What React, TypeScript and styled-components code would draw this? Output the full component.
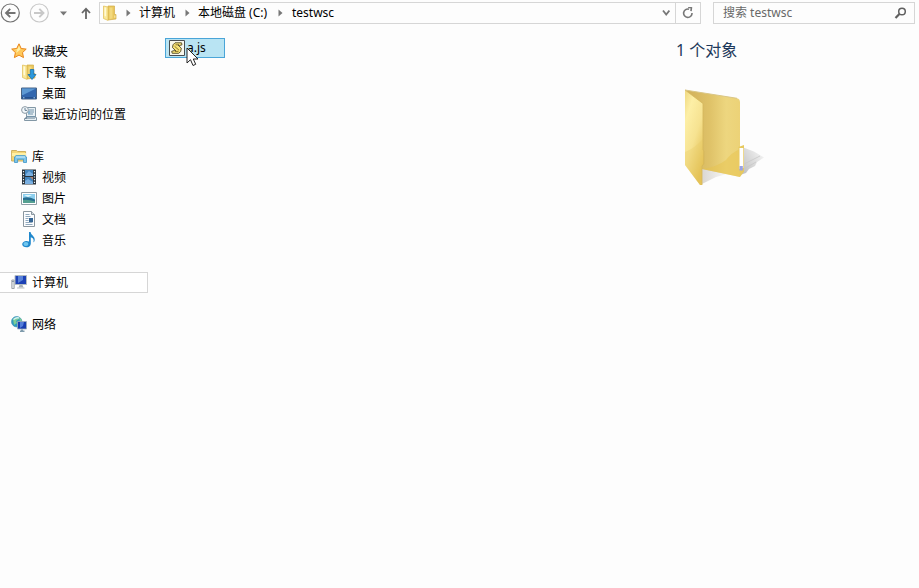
import React from 'react';
import styled, { createGlobalStyle } from 'styled-components';

const GlobalStyle = createGlobalStyle`
  * { box-sizing: border-box; }
  body {
    margin: 0;
    background: #fdfdfd;
    color: #000;
    font: 12px/20px "Noto Sans", "Noto Sans CJK SC", sans-serif;
    overflow: hidden;
  }
  svg { display: block; flex: none; }
`;

const Window = styled.div`
  width: 919px;
  height: 588px;
  display: flex;
  flex-direction: column;
`;

const Toolbar = styled.header`
  height: 24px;
  padding-top: 2px;
  display: flex;
  flex: none;
`;

const NavButtons = styled.div`
  width: 99px;
  height: 22px;
  display: flex;
  align-items: center;
`;

const NavIcon = styled.span<{ $gap?: number }>`
  margin-left: ${(p) => p.$gap ?? 0}px;
`;

const AddressBar = styled.div`
  width: 602px;
  height: 22px;
  border: 1px solid #d6d6d6;
  display: flex;
  align-items: center;
  padding-left: 2px;
`;

const Crumb = styled.span<{ $width: number }>`
  width: ${(p) => p.$width}px;
  white-space: nowrap;
`;

const Chevron = styled.span<{ $before: number; $after: number }>`
  margin-left: ${(p) => p.$before}px;
  margin-right: ${(p) => p.$after}px;
`;

const DropArea = styled.span`
  margin-left: auto;
  width: 17px;
`;

const RefreshButton = styled.span`
  width: 25px;
  height: 20px;
  border-left: 1px solid #d6d6d6;
  display: flex;
  align-items: center;
  justify-content: center;
`;

const SearchBox = styled.div`
  width: 202px;
  height: 22px;
  margin-left: 12px;
  border: 1px solid #d6d6d6;
  padding: 0 7px 0 9px;
  display: flex;
  align-items: center;
  justify-content: space-between;
  color: #686868;
`;

const Content = styled.main`
  display: flex;
  flex: 1;
`;

const Sidebar = styled.nav`
  width: 148px;
  padding-top: 17px;
`;

const Group = styled.section`
  margin-bottom: 21px;
`;

const TreeRow = styled.div<{ $child?: boolean; $selected?: boolean }>`
  height: 21px;
  display: flex;
  align-items: center;
  gap: 5px;
  padding-left: ${(p) => (p.$child ? 20 : 10)}px;
  border: 1px solid ${(p) => (p.$selected ? '#d6d6d6' : 'transparent')};
  border-left-width: ${(p) => (p.$selected ? 0 : 1)}px;
  ${(p) => p.$selected && 'padding-left: 11px; background: #fff;'}
  white-space: nowrap;

  svg { margin-top: -1px; }
`;

const FileList = styled.section`
  width: 516px;
  padding: 14px 0 0 17px;
`;

const FileItem = styled.div`
  position: relative;
  width: 60px;
  height: 20px;
  border: 1px solid #4aa5d8;
  background: #b9e4f3;
  display: flex;
  align-items: center;
  padding-left: 3px;
  gap: 2px;
`;

const Pointer = styled.span`
  position: absolute;
  left: 20px;
  top: 8px;
`;

const Details = styled.aside`
  padding: 14px 0 0 12px;
`;

const DetailsTitle = styled.h1`
  margin: 0 0 24px;
  color: #1e395b;
  font-size: 16px;
  font-weight: 400;
  line-height: 25px;
`;

const FolderPreview = styled.div`
  padding-left: 4px;
`;

const Star = () => (
  <svg width="16" height="16" viewBox="0 0 16 16">
    <path d="M8 .8 10.2 5.5l5 .6-3.7 3.5 1 5L8 12.1l-4.6 2.5 1-5L.7 6.1l5-.6z" fill="#ffc95b" stroke="#e98518" />
    <path d="M8 2.8 9.4 6.6 5.2 10 6 6.7 3 6.9 6.6 6z" fill="#fff0a6" />
  </svg>
);

const SmallFolder = ({ download }: { download?: boolean }) => (
  <svg width="16" height="16" viewBox="0 0 16 16">
    <path d="M6 1h6.5v8.5H14V14l-8 1z" fill="#e9c65d" stroke="#d3ae49" strokeWidth=".7" />
    <path d="M1.5 1 6 2v13.4L1.5 13.5z" fill="#fae89a" stroke="#dfbd54" strokeWidth=".7" />
    <path d="M2.5 2.5H4v9l-1.5-.8zM12.5 10.5h.8v2.3h-.8z" fill="#fff9d6" />
    <path d="M7.5 2.5h3v11l-3 .5z" fill="#f3d97e" />
    {download && <path d="M9.3 5.5h3.5v5H15l-4 5-4-5h2.3z" fill="#2b98dc" stroke="#176fae" strokeWidth=".8" />}
  </svg>
);

const Desktop = () => (
  <svg width="16" height="16" viewBox="0 0 16 16">
    <path d="M.5 3h15v11H.5z" fill="#3267ae" stroke="#496383" />
    <path d="M1 3.5h14L2 10H1z" fill="#5d99d3" />
    <path d="M1 12h14v1.5H1z" fill="#24508f" />
    <path d="M2 12.8h1.5m9 0h1.5" stroke="#a5cfec" />
  </svg>
);

const Recent = () => (
  <svg width="16" height="16" viewBox="0 0 16 16">
    <path d="M5.5 1.5h9v10h1v3h-12v-2h2z" fill="#e8f0f4" stroke="#8297a5" />
    <path d="M8 4h5M9 6h4M7 8h5M6 10.5h8" stroke="#7594aa" />
    <path d="M7 5h2v3H7z" fill="#86b4d1" />
    <circle cx="4" cy="4" r="3.4" fill="#f2f7fa" stroke="#8b9aa5" />
    <path d="M4 2v2.4h2M4 12h10" fill="none" stroke="#657f92" />
  </svg>
);

const Library = () => (
  <svg width="16" height="16" viewBox="0 0 16 16">
    <path d="M.6 2.5h5l1 1h8v9.5H.6z" fill="#f5d778" stroke="#cdb060" />
    <path d="M1 5h14v3H1z" fill="#fff0a5" />
    <path d="M3.5 9 5 7.6h9L15.5 9v5.5h-3V11.3H6.6v3.2H3.5z" fill="#7cc4ea" stroke="#3d95c6" strokeWidth=".8" />
    <path d="M5 9h9" stroke="#d5effa" />
  </svg>
);

const Video = () => (
  <svg width="16" height="16" viewBox="0 0 16 16">
    <path d="M1 .5h14v15H1z" fill="#29333c" />
    <path d="M4 1h8v6H4zM4 8h8v7H4z" fill="#4385bd" />
    <path d="M5 5 8 2l4 3v2H5zM4 12l3-2 5 3v2H4z" fill="#7aafe0" />
    <path d="M9 8h3v3z" fill="#b18473" />
    <path d="M2.5 2v12M13.5 2v12" stroke="#ecf2f5" strokeWidth="1.2" strokeDasharray="1.2 1.5" />
  </svg>
);

const Picture = () => (
  <svg width="16" height="16" viewBox="0 0 16 16">
    <path d="M.5 2.5h15v12H.5z" fill="#fff" stroke="#8f9da5" />
    <path d="M2 4h12v9H2z" fill="#8ccfee" />
    <path d="M2 8q5-2 12 1.5v3H2z" fill="#276d91" />
    <path d="M2 10q5-1 12 1.5V13H2z" fill="#55a091" />
    <path d="M3 5h8L7 7z" fill="#e3f7fc" />
  </svg>
);

const Document = () => (
  <svg width="16" height="16" viewBox="0 0 16 16">
    <path d="M2.5.5h8l3 3v12h-11z" fill="#fcfdff" stroke="#8a969f" />
    <path d="M10.5.5v3h3" fill="#d3dce1" stroke="#8a969f" />
    <path d="M4.5 3.5h4M4.5 5.5h5M4.5 7.5h3M4.5 9.5h3M4.5 11.5h7M4.5 13.5h7" stroke="#91a9bd" />
    <path d="M8 7h4v4H8z" fill="#356594" />
  </svg>
);

const Music = () => (
  <svg width="16" height="16" viewBox="0 0 16 16">
    <path d="M8 0h1.6c.2 3.5 5.6 4.5 3.7 9.5-.3.8-.8 1-.9.6.9-3-.8-4.3-2.6-4.8v6.4c0 4.8-8.6 4.7-8.6.6 0-2.9 3.8-4.2 6.8-2.8z" fill="#2088cc" />
    <ellipse cx="4.9" cy="12" rx="2.5" ry="1.9" fill="#6fc6ef" />
  </svg>
);

const Computer = () => (
  <svg width="16" height="16" viewBox="0 0 16 16">
    <path d="M.8 6h2.4v8.5H.8z" fill="#e4e7e9" stroke="#8b9298" strokeWidth=".8" />
    <path d="M1.3 7.5h1.3" stroke="#657a91" />
    <path d="M4 1.5h11.5v9H4z" fill="#1c41b5" stroke="#b3bcc2" />
    <path d="M7 2h5v4L7 9z" fill="#5b83da" />
    <path d="M8.5 11h3l1 2.5h-5z" fill="#a7b0b6" />
    <path d="M6 14h7.5" stroke="#bcc1c3" />
  </svg>
);

const Network = () => (
  <svg width="16" height="16" viewBox="0 0 16 16">
    <circle cx="5.7" cy="5.7" r="5.2" fill="#2c9bbd" stroke="#4c9abb" strokeWidth=".8" />
    <path d="M2 3 6 1l2 2-3 2 1 2-3 2zM8 1l3 3-2 2z" fill="#7ccc96" />
    <path d="M2.5 3.5q3-2.5 5.5-1.5" fill="none" stroke="#d2f1f3" strokeWidth="1.5" />
    <path d="M6.5 5.5h9v7.5h-9z" fill="#183eb0" stroke="#9faeba" strokeWidth=".8" />
    <path d="M9 6h4l-1 4-3 2z" fill="#547ed9" />
    <path d="M10 13.4h2v1h1.5V16H9v-1.6h1z" fill="#7f9bac" />
  </svg>
);

const BackArrow = ({ disabled }: { disabled?: boolean }) => (
  <svg width="20" height="20" viewBox="0 0 20 20" fill="none" stroke={disabled ? '#c8c8c8' : '#737373'}>
    <circle cx="10.3" cy="10" r="9" strokeWidth="1.2" />
    <g transform={disabled ? 'matrix(-1 0 0 1 20.5 0)' : undefined} strokeWidth="2">
      <path d="M6 10h9.5M10.2 5.9 6.1 10l4.1 4.1" />
    </g>
  </svg>
);

const CrumbArrow = () => (
  <svg width="5" height="8" viewBox="0 0 5 8"><path d="M.5.5 4.5 4l-4 3.5z" fill="#777" /></svg>
);

const ScriptIcon = () => (
  <svg width="16" height="16" viewBox="0 0 16 16">
    <path d="M.5.5h15v15H.5z" fill="#f9f8ed" stroke="#494d50" />
    <path d="M6 2.8h6.5l.5 2-2.5.7L9 5l3.3 3.2-.6 3.3-2 1.8H3.2l-.5-2 2.5-.7L7 11 3.5 7.6 4 4.8z" fill="#f8e377" stroke="#4e4726" strokeWidth=".9" />
    <path d="M6.5 4.8H10M5.5 6.2l4.5 4M6 11.4h3.5" fill="none" stroke="#806b25" strokeWidth=".9" />
  </svg>
);

const LargeFolder = () => (
  <svg width="88" height="102" viewBox="0 0 88 102">
    <defs>
      <linearGradient id="cover" x2=".6" y2="1">
        <stop stopColor="#efd880" /><stop offset=".25" stopColor="#fdefa6" />
        <stop offset=".6" stopColor="#f6e290" /><stop offset="1" stopColor="#e2be50" />
      </linearGradient>
      <linearGradient id="back">
        <stop stopColor="#d0af5a" /><stop offset=".45" stopColor="#dfc268" /><stop offset=".75" stopColor="#edd67f" /><stop offset="1" stopColor="#ecd277" />
      </linearGradient>
      <linearGradient id="shadow" gradientUnits="userSpaceOnUse" x1="60" y1="80" x2="82" y2="66">
        <stop stopColor="#c2c2c2" /><stop offset=".55" stopColor="#dcdcdc" /><stop offset="1" stopColor="#f2f2f2" />
      </linearGradient>
      <linearGradient id="floor"><stop stopColor="#dad7d2" /><stop offset="1" stopColor="#f8f8f8" /></linearGradient>
    </defs>
    <path d="M62 60 74 64.5 84 70.5 77 75 75 79 69 82 66 86 60 88z" fill="url(#shadow)" />
    <path d="M64 77 80 69M64 82 76 75" stroke="#c8c8c8" strokeWidth=".8" />
    <path d="M22 80 47 87 36 90 22 97z" fill="url(#floor)" />
    <path d="M5 3 57 11.3q3 .7 3 4V90L22 82V17z" fill="url(#back)" />
    <path d="M60 62v28l-38-8q15-2 24-9 5-7 14-11z" fill="#e8c44e" opacity=".5" />
    <path d="M58.5 60 64 58v26.5L60 90z" fill="#e7c95f" />
    <path d="M59.5 61h3.8v20l-3.8 1z" fill="#fff" />
    <path d="M59.5 79h3.3v4.5h-3.3z" fill="#9aa2e2" />
    <path d="M5 3 23 16.5V63l.8 1v13L22 79v19h-2L5 78z" fill="url(#cover)" />
    <path d="M5 65q10-4 18-13v25l-1 2v19h-2L5 78z" fill="#e9cb66" opacity=".35" />
    <path d="M5 3 23 16.5V63l.8 1v13L22 79v19" fill="none" stroke="#d4b65a" strokeWidth=".8" />
    <path d="m5 3 52 8.3" fill="none" stroke="#dac686" strokeWidth="1" />
  </svg>
);

const favorites = [
  { label: '下载', icon: <SmallFolder download /> },
  { label: '桌面', icon: <Desktop /> },
  { label: '最近访问的位置', icon: <Recent /> },
];
const libraries = [
  { label: '视频', icon: <Video /> },
  { label: '图片', icon: <Picture /> },
  { label: '文档', icon: <Document /> },
  { label: '音乐', icon: <Music /> },
];

export default function App() {
  return (
    <Window>
      <GlobalStyle />
      <Toolbar>
        <NavButtons>
          <NavIcon><BackArrow /></NavIcon>
          <NavIcon $gap={9}><BackArrow disabled /></NavIcon>
          <NavIcon $gap={11}>
            <svg width="7" height="5"><path d="M0 .5h7L3.5 4.5z" fill="#777" /></svg>
          </NavIcon>
          <NavIcon $gap={14}>
            <svg width="10" height="12" fill="none" stroke="#666" strokeWidth="1.8"><path d="M5 12V1.5M1 6l4-4.3L9 6" /></svg>
          </NavIcon>
        </NavButtons>
        <AddressBar>
          <SmallFolder />
          <Chevron $before={8} $after={8}><CrumbArrow /></Chevron>
          <Crumb $width={37}>计算机</Crumb>
          <Chevron $before={9} $after={8}><CrumbArrow /></Chevron>
          <Crumb $width={72}>本地磁盘 (C:)</Crumb>
          <Chevron $before={8} $after={9}><CrumbArrow /></Chevron>
          <Crumb $width={45}>testwsc</Crumb>
          <DropArea>
            <svg width="12" height="8" viewBox="0 0 12 8"><path d="m5 1.5 3.2 4 3.2-4" fill="none" stroke="#777" strokeWidth="1.8" /></svg>
          </DropArea>
          <RefreshButton>
            <svg width="12" height="12" viewBox="0 0 12 12"><path d="M7 2.2A4.2 4.2 0 1 0 10 6M6.2.2 9.4.8 9 4.2" fill="none" stroke="#777" strokeWidth="1.6" /></svg>
          </RefreshButton>
        </AddressBar>
        <SearchBox>
          <span>搜索 testwsc</span>
          <svg width="13" height="12" viewBox="0 0 13 12" fill="none" stroke="#606060">
            <circle cx="8" cy="4.5" r="3.3" strokeWidth="1.5" /><path d="M5.4 7 1.5 11" strokeWidth="2.2" />
          </svg>
        </SearchBox>
      </Toolbar>
      <Content>
        <Sidebar>
          <Group>
            <TreeRow><Star />收藏夹</TreeRow>
            {favorites.map((f) => <TreeRow $child key={f.label}>{f.icon}{f.label}</TreeRow>)}
          </Group>
          <Group>
            <TreeRow><Library />库</TreeRow>
            {libraries.map((l) => <TreeRow $child key={l.label}>{l.icon}{l.label}</TreeRow>)}
          </Group>
          <Group><TreeRow $selected><Computer />计算机</TreeRow></Group>
          <Group><TreeRow><Network />网络</TreeRow></Group>
        </Sidebar>
        <FileList>
          <FileItem>
            <ScriptIcon />
            a.js
            <Pointer>
              <svg width="13" height="20" viewBox="0 0 13 20">
                <path d="M1 1v15l3.5-3.3L7 18.5l2.7-1.2L7.3 12H12z" fill="#fff" stroke="#222" />
              </svg>
            </Pointer>
          </FileItem>
        </FileList>
        <Details>
          <DetailsTitle>1 个对象</DetailsTitle>
          <FolderPreview><LargeFolder /></FolderPreview>
        </Details>
      </Content>
    </Window>
  );
}
